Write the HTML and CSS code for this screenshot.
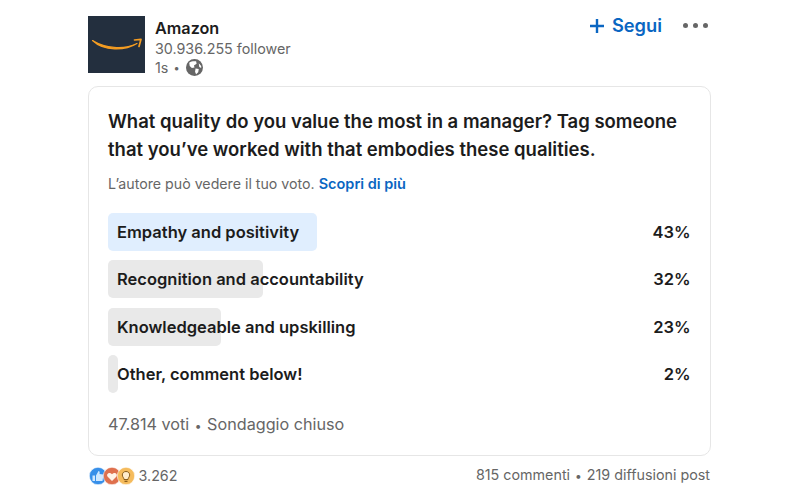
FILE: index.html
```html
<!DOCTYPE html>
<html lang="it">
<head>
<meta charset="utf-8">
<title>Amazon poll</title>
<link rel="stylesheet" href="styles.css">
</head>
<body>
<main class="post">
  <header class="head">
    <svg class="logo" viewBox="0 0 57 57" aria-hidden="true">
      <rect width="57" height="57" fill="#232f3e"/>
      <path d="M4.500 24.500C17 32 35 34.500 49 27.500C37 35 16 35.500 4.500 24.500Z" fill="#f39c22" stroke="#f39c22" stroke-width="1.200" stroke-linejoin="round"/>
      <path d="M46.500 24L53 23.300L51 30.500" fill="none" stroke="#f39c22" stroke-width="1.700" stroke-linecap="round" stroke-linejoin="round"/>
    </svg>
    <div class="who">
      <div class="name">Amazon</div>
      <div class="sub">30.936.255 follower</div>
      <div class="time">1s <span class="dot">•</span>
        <svg class="globe" viewBox="0 0 16 16" aria-hidden="true">
          <circle cx="8" cy="8" r="8" fill="#666"/>
          <path d="M3 3.500C5 2 7.500 1.800 9.500 2.200L10 4.500L7.500 6L8 8L5.500 8.500L3.500 6.500ZM9 9L12 9.500L11.500 12.500L9.500 14.300L8.500 12ZM12 4L14.300 6.500L14.300 8.500L12.500 7.500Z" fill="#fff"/>
        </svg>
      </div>
    </div>
    <div class="actions">
      <span class="follow"><svg class="plus" viewBox="0 0 16 16" aria-hidden="true"><path d="M8 1V15M1 8H15" stroke="#0a66c2" stroke-width="2.400" fill="none"/></svg>Segui</span>
      <span class="more"><i></i><i></i><i></i></span>
    </div>
  </header>

  <section class="card">
    <h1 class="question">What quality do you value the most in a manager? Tag someone that you’ve worked with that embodies these qualities.</h1>
    <p class="note">L’autore può vedere il tuo voto. <a class="link">Scopri di più</a></p>
    <div class="options">
      <div class="option"><div class="fill mine" style="width:209px"></div><span class="label">Empathy and positivity</span><span class="pct">43%</span></div>
      <div class="option"><div class="fill" style="width:155px"></div><span class="label">Recognition and accountability</span><span class="pct">32%</span></div>
      <div class="option"><div class="fill" style="width:113px"></div><span class="label">Knowledgeable and upskilling</span><span class="pct">23%</span></div>
      <div class="option"><div class="fill" style="width:10px"></div><span class="label">Other, comment below!</span><span class="pct">2%</span></div>
    </div>
    <div class="votes">47.814 voti <span class="sep">•</span> Sondaggio chiuso</div>
  </section>

  <footer class="foot">
    <div class="reacts">
      <span class="faces">
        <svg class="face" viewBox="0 0 18 18" aria-hidden="true"><circle cx="9" cy="9" r="8.700" fill="#378fe9" stroke="#fff" stroke-width=".6"/><path d="M3.500 8.500H6V14H3.500ZM7 8.500L9.500 4C10.700 4 11 5.500 10.500 7L14.500 7.500L13.500 14H7Z" fill="#d0e8ff"/></svg>
        <svg class="face" viewBox="0 0 18 18" aria-hidden="true"><circle cx="9" cy="9" r="8.700" fill="#df704d" stroke="#fff" stroke-width=".6"/><path d="M9 14L4.500 9.500C3 7 6.500 4.500 9 7.300C11.500 4.500 15 7 13.500 9.500Z" fill="#fff3e8"/></svg>
        <svg class="face" viewBox="0 0 18 18" aria-hidden="true"><circle cx="9" cy="9" r="8.700" fill="#f5bb5c" stroke="#fff" stroke-width=".6"/><path d="M9 4.500C6.500 4.500 5.300 6.300 5.300 8C5.300 9.800 7 10.800 7 12.500H11C11 10.800 12.700 9.800 12.700 8C12.700 6.300 11.500 4.500 9 4.500Z" fill="#ffeccc" stroke="#7a4f10" stroke-width=".9"/><path d="M7.500 14.300H10.500" stroke="#7a4f10" stroke-width="1.100"/></svg>
      </span>
      <span class="count">3.262</span>
    </div>
    <div class="stats">815 commenti <span class="sep">•</span> 219 diffusioni post</div>
  </footer>
</main>
</body>
</html>
```
FILE: styles.css
```css
* { box-sizing: border-box; }
html, body { margin: 0; background: #fff; }
body { width: 800px; height: 500px; overflow: hidden; font-family: Inter, "Liberation Sans", sans-serif; color: #1f1f1f; }
.post { padding: 16px 89px 0 87.500px; }

.head { display: flex; height: 70px; }
.logo { width: 57px; height: 57px; flex: none; margin-left: .5px; }
.who { margin-left: 10px; padding-top: 2.500px; flex: 1; }
.name { font-size: 16.200px; font-weight: 600; line-height: 18px; color: #1c1c1c; }
.sub { font-size: 14.300px; line-height: 20px; color: #666; margin-top: 2px; }
.time { display: flex; align-items: center; gap: 4px; font-size: 14.300px; line-height: 18px; color: #666; }
.dot { font-size: 11px; margin: 0 2px 0 1px; }
.globe { width: 17px; height: 17px; }

.actions { display: flex; align-items: flex-start; }
.follow { display: flex; align-items: center; gap: 7px; color: #0a66c2; font-size: 18.300px; font-weight: 600; line-height: 19px; }
.plus { width: 16px; height: 16px; }
.more { display: flex; gap: 5px; margin: 7px 3px 0 21px; }
.more i { width: 5px; height: 5px; border-radius: 50%; background: #666; }

.card { border: 1px solid #e6e6e6; border-radius: 10px; height: 370px; padding: 20px 19.500px 0; }
.question { margin: 0; font-size: 18.500px; font-weight: 600; line-height: 28px; color: #1c1c1c; }
.note { margin: 11px 0 0; font-size: 14.200px; line-height: 20px; color: #666; }
.link { color: #0a66c2; font-weight: 600; font-size: 14.500px; }

.options { display: flex; flex-direction: column; gap: 9.400px; margin-top: 19px; }
.option { position: relative; display: flex; justify-content: space-between; align-items: center; height: 38px; padding: 0 0 0 9px; font-size: 16.500px; font-weight: 600; color: #1c1c1c; }
.fill { position: absolute; left: 0; top: 0; bottom: 0; border-radius: 5px; background: #e9e9e9; }
.fill.mine { background: #e0eefe; }
.label, .pct { position: relative; }

.votes { margin-top: 18.500px; font-size: 16.200px; line-height: 24px; color: #666; }
.sep { font-size: 12px; margin: 0 1px; }

.foot { display: flex; justify-content: space-between; align-items: center; margin-top: 9px; padding-right: 1px; font-size: 14.300px; line-height: 20px; color: #666; }
.reacts { display: flex; align-items: center; gap: 4px; }
.faces { display: flex; padding-right: 4px; margin-left: 1px; }
.face { width: 18px; height: 18px; margin-right: -4px; }
```
